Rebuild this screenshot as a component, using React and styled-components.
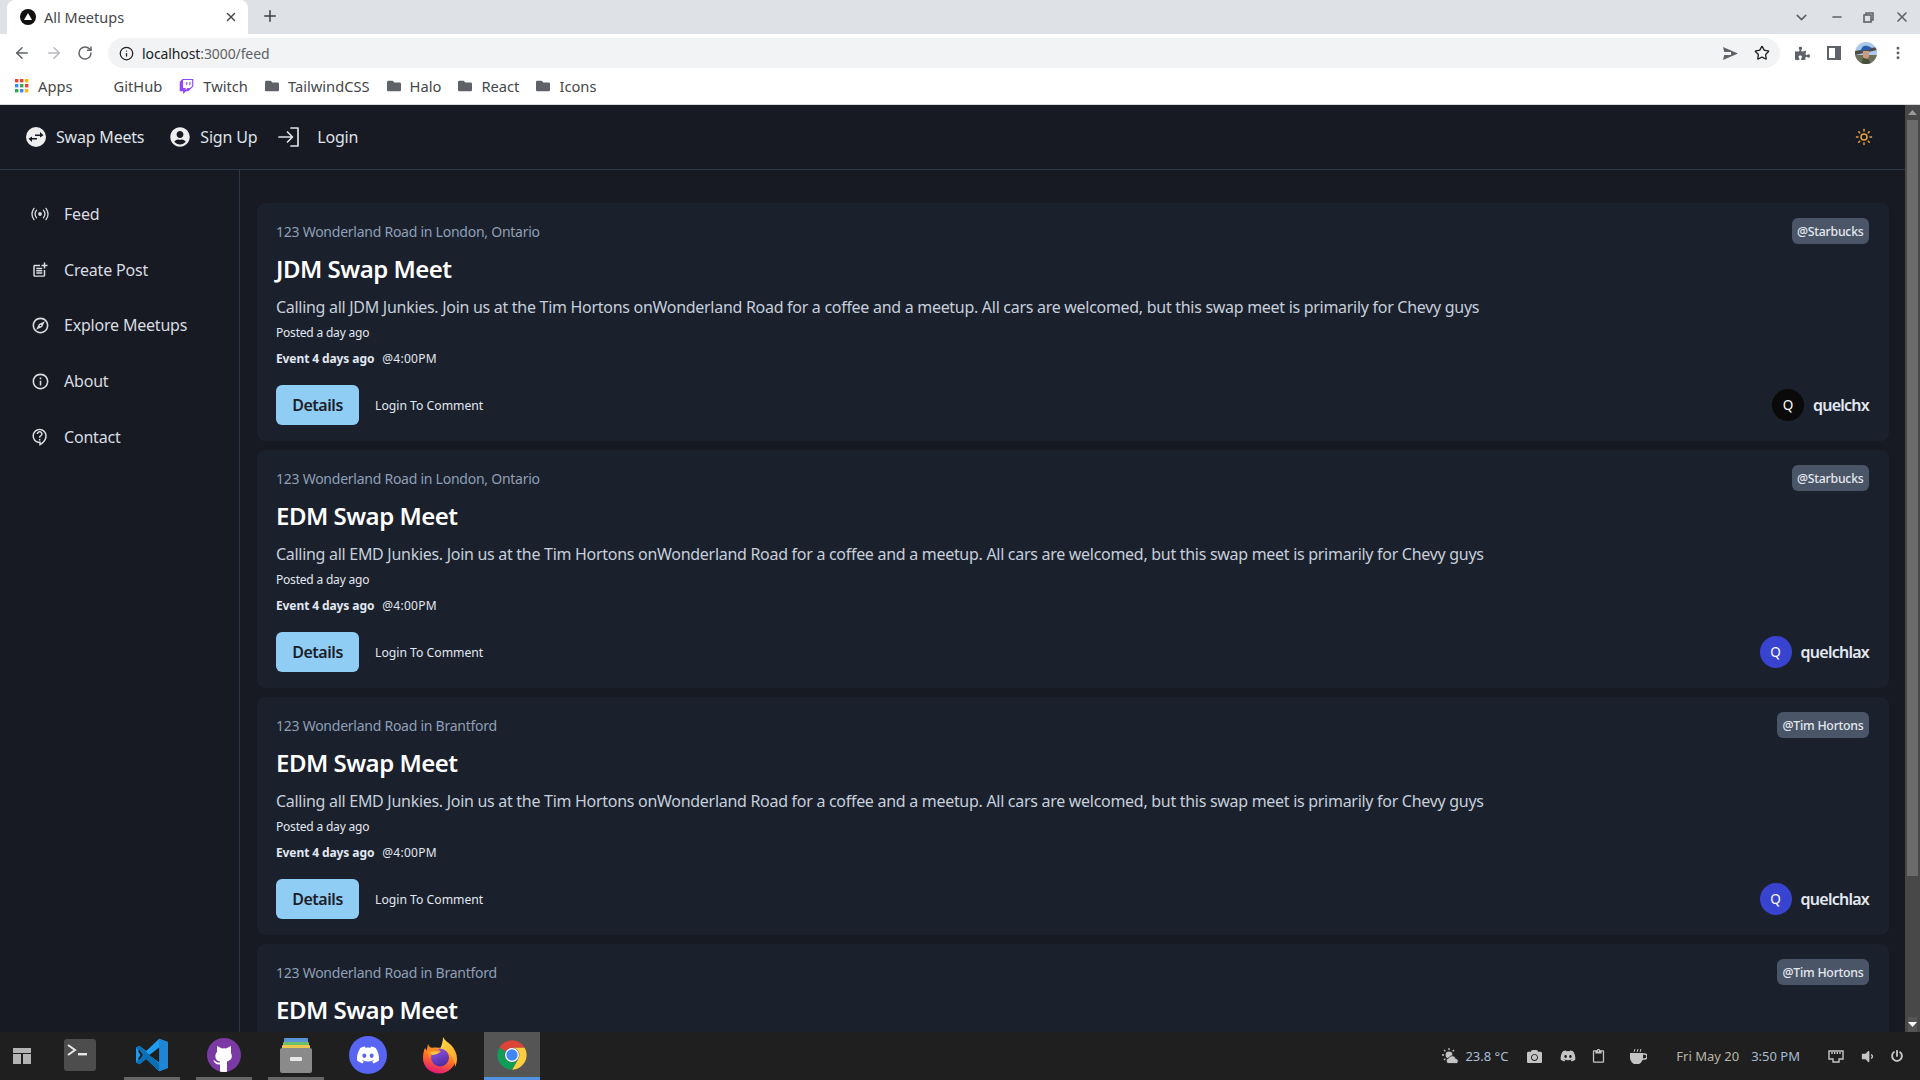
import React from "react";
import styled, { createGlobalStyle } from "styled-components";
import { FaUserCircle, FaTwitch, FaFolder, FaDiscord, FaPuzzlePiece, FaCamera, FaPowerOff, FaVolumeDown } from "react-icons/fa";
import { MdOutlinePostAdd, MdOutlineExplore, MdInfoOutline, MdOutlineContactSupport, MdContentPaste } from "react-icons/md";
import { Sun, ArrowLeft, ArrowRight, RotateCw, X, Plus, ChevronDown, Info, Star, EllipsisVertical, Minus } from "lucide-react";

const BODY = '"Noto Sans", "Open Sans", sans-serif';
const UI = '"Noto Sans", sans-serif';

const Global = createGlobalStyle`
  html, body { margin: 0; padding: 0; background: #171923; overflow: hidden; }
  * { box-sizing: border-box; }
`;
const Screen = styled.div`
  width: 1920px; height: 1080px; display: flex; flex-direction: column; overflow: hidden; font-family: ${BODY};
`;

/* browser chrome */
const TabStrip = styled.div`
  height: 34px; background: #dee1e6; display: flex; align-items: flex-end; padding-left: 7px; color: #3c4043; flex: none;
`;
const Tab = styled.div`
  width: 241px; height: 34px; background: #fff; border-radius: 8px 8px 0 0; display: flex; align-items: center; padding: 0 10px 0 13px;
  font: 14.5px ${UI}; color: #45474b;
`;
const TabTitle = styled.span`margin-left: 8px; flex: 1;`;
const NewTab = styled.div`margin: 0 0 7px 13px; height: 20px; display: flex;`;
const WindowControls = styled.div`
  margin-left: auto; display: flex; align-items: center; height: 34px; color: #5f6368;
`;
const WindowButton = styled.div`width: ${p => p.$w}px; display: flex; justify-content: center;`;
const Toolbar = styled.div`
  height: 34px; background: #fff; display: flex; align-items: center; padding: 4px 0 0 13px; color: #5f6368; flex: none;
`;
const NavButton = styled.div`width: 32px; display: flex; color: ${p => p.$off ? "#b6b9bd" : "#5f6368"};`;
const Omnibox = styled.div`
  margin-left: -1px; width: 1672px; height: 30px; border-radius: 15px; background: #f1f3f4; display: flex; align-items: center; padding: 0 2px 0 11px;
  font: 14px ${UI}; color: #202124; letter-spacing: -.1px;
`;
const UrlDim = styled.span`color: #5f6368;`;
const UrlText = styled.span`margin-left: 8px; flex: 1;`;
const OmniAction = styled.div`width: 32px; display: flex; justify-content: center;`;
const ToolbarRight = styled.div`display: flex; align-items: center; margin-left: 6px;`;
const ToolSlot = styled.div`width: 32px; display: flex; justify-content: center; align-items: center;`;
const Bookmarks = styled.div`
  height: 37px; background: #fff; display: flex; align-items: center; padding-left: 15px; font: 14.7px ${UI}; color: #45474b; flex: none;
  border-bottom: 1px solid #d7d9dc;
`;
const Bookmark = styled.div`display: flex; align-items: center; gap: 9px; margin-right: ${p => p.$mr ?? 17}px; color: #45474b;`;

/* page */
const Page = styled.div`flex: 1; min-height: 0; display: flex; background: #171923; position: relative;`;
const PageMain = styled.div`flex: 1; min-width: 0; display: flex; flex-direction: column;`;
const TopBar = styled.header`
  height: 65px; flex: none; border-bottom: 1px solid #2d3748; display: flex; align-items: center; padding: 0 32px 0 26px; color: #dfe2e7; font-size: 16px; letter-spacing: -.2px;
`;
const TopLink = styled.div`display: flex; align-items: center; gap: ${p => p.$gap ?? 10}px; margin-right: ${p => p.$mr ?? 26}px;`;
const ThemeToggle = styled.div`margin-left: auto; color: #e7a23f; display: flex;`;
const Body = styled.div`flex: 1; min-height: 0; display: flex;`;
const Sidebar = styled.nav`
  width: 240px; flex: none; border-right: 1px solid #2d3748; padding: 16px 0 0 30px; display: flex; flex-direction: column;
`;
const SideItem = styled.div`
  height: 55.8px; display: flex; align-items: center; gap: 14px; color: #d9dce1; font-size: 16px; letter-spacing: -.2px;
`;
const SideIcon = styled.span`width: 20px; height: 20px; display: flex; align-items: center; justify-content: center; color: #d9dce1;`;
const Feed = styled.main`
  flex: 1; min-width: 0; overflow: hidden; padding: 33px 16px 0 17px; display: flex; flex-direction: column; gap: 9px;
`;
const Card = styled.article`
  flex: none; height: 238px; border-radius: 8px; background: #1a202c; padding: 15px 20px 16px 19px; display: flex; flex-direction: column;
`;
const CardTop = styled.div`display: flex; justify-content: space-between; align-items: center; height: 26px;`;
const Location = styled.div`font-size: 14px; color: #8f9fb5; letter-spacing: -.25px;`;
const Badge = styled.div`
  height: 26px; border-radius: 6px; background: #4a5568; color: #e2e8f0; font-size: 12.3px; font-weight: 500; letter-spacing: -.25px; padding: 0 5.5px; display: flex; align-items: center;
`;
const Title = styled.h2`margin: 7px 0 0; font-size: 24px; line-height: 36px; font-weight: 600; color: #fff; letter-spacing: -.5px;`;
const Text = styled.p`margin: 8px 0 0; font-size: 16px; line-height: 24px; color: #c6cfdb; letter-spacing: -.29px;`;
const Posted = styled.div`margin-top: 5px; font-size: 12px; line-height: 18px; color: #e2e8f0; letter-spacing: -.2px;`;
const EventLine = styled.div`margin-top: 8px; font-size: 12px; line-height: 18px; color: #e2e8f0; display: flex; gap: 8px;`;
const EventWhen = styled.b`font-weight: 700; letter-spacing: -.1px;`;
const EventTime = styled.span`letter-spacing: .25px;`;
const Actions = styled.div`margin-top: 17px; display: flex; align-items: center;`;
const DetailsButton = styled.button`
  width: 83px; height: 40px; border: 0; border-radius: 6px; background: #90cdf4; color: #1a202c; font: 600 16px ${BODY}; letter-spacing: -.45px; padding: 0;
`;
const CommentLink = styled.span`margin-left: 16px; font-size: 12.2px; color: #e2e8f0;`;
const Author = styled.div`margin-left: auto; display: flex; align-items: center; gap: 9px; font-size: 16px; font-weight: 600; letter-spacing: -.75px; color: #e2e8f0;`;
const Avatar = styled.span`
  width: 32px; height: 32px; border-radius: 50%; display: flex; align-items: center; justify-content: center; font-size: 13.5px; font-weight: 400; letter-spacing: 0;
  background: ${p => p.$bg}; color: #fff;
`;
const Scrollbar = styled.div`width: 15px; flex: none; background: #484848; display: flex; flex-direction: column; align-items: center;`;
const ScrollArrow = styled.div`height: 15px; flex: none; display: flex; align-items: center; justify-content: center;`;
const ScrollArrowDown = styled(ScrollArrow)`margin-top: auto; background: #555;`;
const ScrollThumb = styled.div`width: 11px; height: 756px; background: #6b6b6b; flex: none;`;

/* taskbar */
const Taskbar = styled.footer`
  height: 48px; flex: none; background: #1f1f1f; display: flex; align-items: center; font: 13px ${UI}; color: #bdbdbd;
`;
const Launcher = styled.div`width: 44px; height: 48px; margin-right: 8px; display: flex; align-items: center; justify-content: center;`;
const Dock = styled.div`display: flex; gap: 16px;`;
const DockItem = styled.div`
  width: 56px; height: 48px; display: flex; align-items: center; justify-content: center;
  background: ${p => p.$active ? "#555" : "transparent"};
  border-bottom: 3px solid ${p => p.$active ? "#5294e2" : p.$open ? "#666" : "transparent"};
`;
const Tray = styled.div`margin-left: auto; display: flex; align-items: center; color: #c4c4c4;`;
const TraySlot = styled.span`display: flex; justify-content: center; align-items: center; width: ${p => p.$w ?? 24}px; margin-left: ${p => p.$ml ?? 0}px;`;
const TrayText = styled.span`color: ${p => p.$c}; margin-left: ${p => p.$ml}px; white-space: nowrap;`;

/* drawings */
const SwapLogo = () => (
  <svg width="20" height="20" viewBox="0 0 20 20"><circle cx="10" cy="10" r="10" fill="#eee" />
    <path d="M9 7.5h5V5l3.5 3.2L14 10.5V9H9zM11 12.5H6V15l-3.5-3.2L6 9.5V11h5z" fill="#171923" /></svg>
);
const LoginIcon = () => (
  <svg width="22" height="20" viewBox="0 0 22 20" fill="none" stroke="currentColor" strokeWidth="1.7" strokeLinecap="round" strokeLinejoin="round">
    <path d="M1 10h13M9.5 5l5 5-5 5M13 1h7v18h-7" />
  </svg>
);
const Broadcast = () => (
  <svg width="18" height="18" viewBox="0 0 18 18" fill="none" stroke="currentColor" strokeWidth="1.3" strokeLinecap="round">
    <circle cx="9" cy="9" r="1.9" fill="currentColor" stroke="none" />
    <path d="M5.6 5.2a6 6 0 0 0 0 7.6M12.4 5.2a6 6 0 0 1 0 7.6M3 3.4a9.5 9.5 0 0 0 0 11.2M15 3.4a9.5 9.5 0 0 1 0 11.2" />
  </svg>
);
const Favicon = () => (
  <svg width="16" height="16" viewBox="0 0 16 16"><circle cx="8" cy="8" r="8" fill="#111" /><path d="M8 4l4 7H4z" fill="#fff" /></svg>
);
const SendIcon = () => (
  <svg width="15" height="13" viewBox="0 0 15 13"><path d="M0 0l15 6.500L0 13l1.200-5H8V5H1.200z" fill="#5f6368" /></svg>
);
const AppsGrid = () => {
  const c = ["#ea4335","#ea4335","#fbbc04","#4285f4","#34a853","#ea4335","#34a853","#4285f4","#fbbc04"];
  return (
    <svg width="14" height="14" viewBox="0 0 14 14">
      {c.map((f, i) => <rect key={i} x={(i % 3) * 5} y={Math.floor(i / 3) * 5} width="3.4" height="3.4" fill={f} />)}
    </svg>
  );
};
const ProfilePic = () => (
  <svg width="22" height="22" viewBox="0 0 22 22">
    <defs><clipPath id="pc"><circle cx="11" cy="11" r="11" /></clipPath></defs>
    <g clipPath="url(#pc)">
      <rect width="22" height="22" fill="#a9c8ea" />
      <rect y="13" width="22" height="9" fill="#6d6f58" />
      <path d="M0 9l22 -4v3L0 13z" fill="#4d4a48" />
      <path d="M6 9c0-4 3-6 7-5l4 2-3 2-8 1z" fill="#2b5ea8" />
      <path d="M8 9h6v6l-3 3-3-3z" fill="#c99b80" />
      <path d="M6 22l2-6 5 1 3 5z" fill="#46503a" />
    </g>
  </svg>
);
const PanelIcon = () => (
  <svg width="14" height="14" viewBox="0 0 14 14"><path fillRule="evenodd" d="M0 0h14v14H0zM2 2v10h6V2z" fill="#5f6368" /></svg>
);
const RestoreIcon = () => (
  <svg width="11" height="11" viewBox="0 0 11 11" fill="none" stroke="#5f6368" strokeWidth="1.6"><path d="M3 3V1h7v7H8" /><rect x="1" y="3" width="7" height="7" /></svg>
);
const LayoutIcon = () => (
  <svg width="18" height="18" viewBox="0 0 18 18" fill="#b3b3b3"><rect width="18" height="5" y="1" /><rect width="8" height="10" y="7" /><rect width="8" height="10" x="10" y="7" /></svg>
);
const TerminalIcon = () => (
  <svg width="32" height="32" viewBox="0 0 32 32"><rect width="32" height="32" rx="3" fill="#4d4d4d" />
    <path d="M4 6l7 5-7 5" fill="none" stroke="#e8e8e8" strokeWidth="2" /><rect x="14" y="14" width="9" height="2.4" fill="#e8e8e8" /></svg>
);
const VsCode = () => (
  <svg width="34" height="36" viewBox="0 0 100 100">
    <path d="M71 2L33 38 13 23 3 28v44l10 5 20-15 38 36 26-10V12z" fill="#1f9cf0" />
    <path d="M71 2v96l26-10V12z" fill="#1f86d6" />
    <path d="M3 28l10-5 58 52v23L33 62 13 77 3 72l17-22z" fill="#0a6fb5" />
    <path d="M71 28v44L42 50z" fill="#1f1f1f" />
    <path d="M13 35l10 15-10 15-4-4 7-11-7-11z" fill="#1f1f1f" />
  </svg>
);
const GitHubIcon = () => (
  <svg width="34" height="34" viewBox="0 0 34 34">
    <defs><clipPath id="gh"><circle cx="17" cy="17" r="17" /></clipPath></defs>
    <circle cx="17" cy="17" r="17" fill="#7b39a3" />
    <g clipPath="url(#gh)">
      <path d="M10 15V8l5 2.5q2-.5 4 0L24 8v7q2 4-.5 6.5-1.500 1.700-3.500 2V34h-7v-7.500q-3 .5-5-1.500l-2-3q3 1 4.500 2.500h2.500v-1q-3-.5-4-2.500-1.500-3 .5-7z" fill="#fff" />
    </g>
  </svg>
);
const FilesIcon = () => (
  <svg width="32" height="36" viewBox="0 0 32 36">
    <rect x="4" y="1" width="24" height="5" rx="1" fill="#5b95d8" />
    <rect x="3" y="5" width="26" height="4" rx="1" fill="#6dbf6a" />
    <rect x="2" y="8" width="28" height="4" rx="1" fill="#edc74d" />
    <rect x="0" y="11" width="32" height="25" rx="2" fill="#8a8a8a" />
    <rect x="10" y="20" width="12" height="4" rx="1" fill="#e8e8e8" />
  </svg>
);
const DiscordIcon = () => (
  <svg width="38" height="38" viewBox="0 0 38 38"><circle cx="19" cy="19" r="19" fill="#5865f2" /><FaDiscord x="7" y="7" size="24" color="#fff" /></svg>
);
const FirefoxIcon = () => (
  <svg width="36" height="38" viewBox="0 0 36 38">
    <defs>
      <linearGradient id="ff" x1="0.75" y1="0" x2="0.35" y2="1"><stop offset="0" stopColor="#ffbd2e" /><stop offset=".5" stopColor="#ff6a2a" /><stop offset="1" stopColor="#e0147a" /></linearGradient>
      <linearGradient id="fp" x1="0.3" y1="0" x2="0.7" y2="1"><stop offset="0" stopColor="#8f55e0" /><stop offset="1" stopColor="#4b2aa0" /></linearGradient>
      <linearGradient id="fy" x1="0" y1="0" x2="1" y2="1"><stop offset="0" stopColor="#ffe04a" /><stop offset="1" stopColor="#ff9a1f" /></linearGradient>
    </defs>
    <path d="M1 22c0-4 .6-7 2-10l2 3c2-2 4-3 7-3.500L24 12q7 4 10 8c.5 9.500-7 17.500-16.500 17.500S1 31 1 22z" fill="url(#ff)" />
    <path d="M18 13c2-4 3-8 3-12 2 4 5 5 8 8 4 4 6 9 6 14 0 3-1 6-2 8 0-8-4-15-15-18z" fill="url(#fy)" />
    <circle cx="18" cy="21.500" r="9" fill="url(#fp)" />
    <path d="M6 8c1 3 3 4 6 4 2 0 5 1 7 4-3 1-6 1-8 2-2 .5-3 2-3 4-2-2-4-6-3-9z" fill="#ff8a24" />
    <path d="M8 16c3-1 7-1 10 0-2 2-6 3-8 3z" fill="#ffc53a" />
  </svg>
);
const ChromeIcon = () => (
  <svg width="32" height="32" viewBox="0 0 48 48">
    <path d="M4.95 13A22 22 0 0 1 43.05 13H24A11 11 0 0 0 14.47 18.500z" fill="#db4437" />
    <path d="M43.05 13A22 22 0 0 1 24 46L33.530 29.500A11 11 0 0 0 24 13z" fill="#ffcd40" />
    <path d="M24 46A22 22 0 0 1 4.95 13L14.470 18.500A11 11 0 0 0 33.530 29.500z" fill="#0f9d58" />
    <circle cx="24" cy="24" r="10.500" fill="#fff" /><circle cx="24" cy="24" r="8.500" fill="#4285f4" />
  </svg>
);
const WeatherIcon = () => (
  <svg width="17" height="17" viewBox="0 0 17 17" fill="#c4c4c4">
    <circle cx="7" cy="7" r="3.4" />
    <path d="M7 0v2M0 7h2M2 2l1.4 1.4M12 2l-1.4 1.4M2 12l1.4-1.4" stroke="#c4c4c4" strokeWidth="1.3" />
    <path d="M6 15.500a3 3 0 0 1 1-5.700 3.600 3.600 0 0 1 6.800.8 2.500 2.500 0 0 1 .7 4.900z" stroke="#1f1f1f" strokeWidth=".8" />
  </svg>
);
const CoffeeIcon = () => (
  <svg width="17" height="16" viewBox="0 0 17 16" fill="#c4c4c4">
    <path d="M0 5h13v5a5.500 5.500 0 0 1-13 0z" /><path d="M13 6h1.500a2 2 0 0 1 0 5H12" fill="none" stroke="#c4c4c4" strokeWidth="1.4" />
    <path d="M4 4l1-3M7 4l1-3M10 4l1-3" stroke="#c4c4c4" />
  </svg>
);
const NetworkIcon = () => (
  <svg width="16" height="13" viewBox="0 0 16 13" fill="none" stroke="#c4c4c4" strokeWidth="1.4">
    <path d="M1 1h14v8h-4v3H5V9H1z" /><path d="M4 2v2M6.600 2v2M9.300 2v2M12 2v2" />
  </svg>
);

const posts = [
  { id: 1, place: "123 Wonderland Road in London, Ontario", badge: "@Starbucks", title: "JDM Swap Meet", kind: "JDM", user: "quelchx", color: "#0a0a0a" },
  { id: 2, place: "123 Wonderland Road in London, Ontario", badge: "@Starbucks", title: "EDM Swap Meet", kind: "EMD", user: "quelchlax", color: "#3843d0" },
  { id: 3, place: "123 Wonderland Road in Brantford", badge: "@Tim Hortons", title: "EDM Swap Meet", kind: "EMD", user: "quelchlax", color: "#3843d0" },
  { id: 4, place: "123 Wonderland Road in Brantford", badge: "@Tim Hortons", title: "EDM Swap Meet", kind: "EMD", user: "quelchlax", color: "#3843d0" },
];
const nav = [
  ["Feed", <Broadcast />],
  ["Create Post", <MdOutlinePostAdd size={18} />],
  ["Explore Meetups", <MdOutlineExplore size={19} />],
  ["About", <MdInfoOutline size={19} />],
  ["Contact", <MdOutlineContactSupport size={18} />],
];

export default function App() {
  return (
    <Screen>
      <Global />
      <TabStrip>
        <Tab><Favicon /><TabTitle>All Meetups</TabTitle><X size={14} strokeWidth={2.4} /></Tab>
        <NewTab><Plus size={18} strokeWidth={2} /></NewTab>
        <WindowControls>
          <WindowButton $w={41}><ChevronDown size={17} strokeWidth={2.2} /></WindowButton>
          <WindowButton $w={30}><Minus size={14} strokeWidth={2.5} /></WindowButton>
          <WindowButton $w={32}><RestoreIcon /></WindowButton>
          <WindowButton $w={36}><X size={16} strokeWidth={2.4} /></WindowButton>
        </WindowControls>
      </TabStrip>
      <Toolbar>
        <NavButton><ArrowLeft size={18} /></NavButton>
        <NavButton $off><ArrowRight size={18} /></NavButton>
        <NavButton><RotateCw size={16} strokeWidth={2.2} /></NavButton>
        <Omnibox>
          <Info size={15} />
          <UrlText>localhost<UrlDim>:3000/feed</UrlDim></UrlText>
          <OmniAction><SendIcon /></OmniAction>
          <OmniAction><Star size={16} strokeWidth={2} /></OmniAction>
        </Omnibox>
        <ToolbarRight>
          <ToolSlot><FaPuzzlePiece size={15} /></ToolSlot>
          <ToolSlot><PanelIcon /></ToolSlot>
          <ToolSlot><ProfilePic /></ToolSlot>
          <ToolSlot><EllipsisVertical size={16} strokeWidth={2.4} /></ToolSlot>
        </ToolbarRight>
      </Toolbar>
      <Bookmarks>
        <Bookmark $mr={41}><AppsGrid />Apps</Bookmark>
        <Bookmark>GitHub</Bookmark>
        <Bookmark><FaTwitch size={15} color="#9146ff" />Twitch</Bookmark>
        <Bookmark><FaFolder size={14} color="#5f6368" />TailwindCSS</Bookmark>
        <Bookmark><FaFolder size={14} color="#5f6368" />Halo</Bookmark>
        <Bookmark><FaFolder size={14} color="#5f6368" />React</Bookmark>
        <Bookmark><FaFolder size={14} color="#5f6368" />Icons</Bookmark>
      </Bookmarks>
      <Page>
        <PageMain>
          <TopBar>
            <TopLink><SwapLogo />Swap Meets</TopLink>
            <TopLink $mr={21}><FaUserCircle size={20} color="#eee" />Sign Up</TopLink>
            <TopLink $gap={17} $mr={0}><LoginIcon />Login</TopLink>
            <ThemeToggle><Sun size={18} strokeWidth={2} /></ThemeToggle>
          </TopBar>
          <Body>
            <Sidebar>
              {nav.map(([label, icon]) => (
                <SideItem key={label}><SideIcon>{icon}</SideIcon>{label}</SideItem>
              ))}
            </Sidebar>
            <Feed>
              {posts.map(p => (
                <Card key={p.id}>
                  <CardTop><Location>{p.place}</Location><Badge>{p.badge}</Badge></CardTop>
                  <Title>{p.title}</Title>
                  <Text>Calling all {p.kind} Junkies. Join us at the Tim Hortons onWonderland Road for a coffee and a meetup. All cars are welcomed, but this swap meet is primarily for Chevy guys</Text>
                  <Posted>Posted a day ago</Posted>
                  <EventLine><EventWhen>Event 4 days ago</EventWhen><EventTime>@4:00PM</EventTime></EventLine>
                  <Actions>
                    <DetailsButton>Details</DetailsButton>
                    <CommentLink>Login To Comment</CommentLink>
                    <Author><Avatar $bg={p.color}>Q</Avatar>{p.user}</Author>
                  </Actions>
                </Card>
              ))}
            </Feed>
          </Body>
        </PageMain>
        <Scrollbar>
          <ScrollArrow><svg width="9" height="5"><path d="M0 5l4.500-5L9 5z" fill="#9a9a9a" /></svg></ScrollArrow>
          <ScrollThumb />
          <ScrollArrowDown><svg width="9" height="5"><path d="M0 0l4.500 5L9 0z" fill="#fff" /></svg></ScrollArrowDown>
        </Scrollbar>
      </Page>
      <Taskbar>
        <Launcher><LayoutIcon /></Launcher>
        <Dock>
          <DockItem><TerminalIcon /></DockItem>
          <DockItem $open><VsCode /></DockItem>
          <DockItem $open><GitHubIcon /></DockItem>
          <DockItem $open><FilesIcon /></DockItem>
          <DockItem><DiscordIcon /></DockItem>
          <DockItem><FirefoxIcon /></DockItem>
          <DockItem $active><ChromeIcon /></DockItem>
        </Dock>
        <Tray>
          <TraySlot><WeatherIcon /></TraySlot>
          <TrayText $c="#a9bcd2" $ml={3}>23.8 °C</TrayText>
          <TraySlot $ml={14}><FaCamera size={15} /></TraySlot>
          <TraySlot $ml={10}><FaDiscord size={16} /></TraySlot>
          <TraySlot $ml={6}><MdContentPaste size={15} /></TraySlot>
          <TraySlot $ml={16}><CoffeeIcon /></TraySlot>
          <TrayText $c="#bdb5a8" $ml={26}>Fri May 20</TrayText>
          <TrayText $c="#a9bcd2" $ml={12}>3:50 PM</TrayText>
          <TraySlot $ml={24}><NetworkIcon /></TraySlot>
          <TraySlot $ml={7}><FaVolumeDown size={15} /></TraySlot>
          <TraySlot $ml={6} ><FaPowerOff size={12} /></TraySlot>
          <TraySlot $w={11} />
        </Tray>
      </Taskbar>
    </Screen>
  );
}
